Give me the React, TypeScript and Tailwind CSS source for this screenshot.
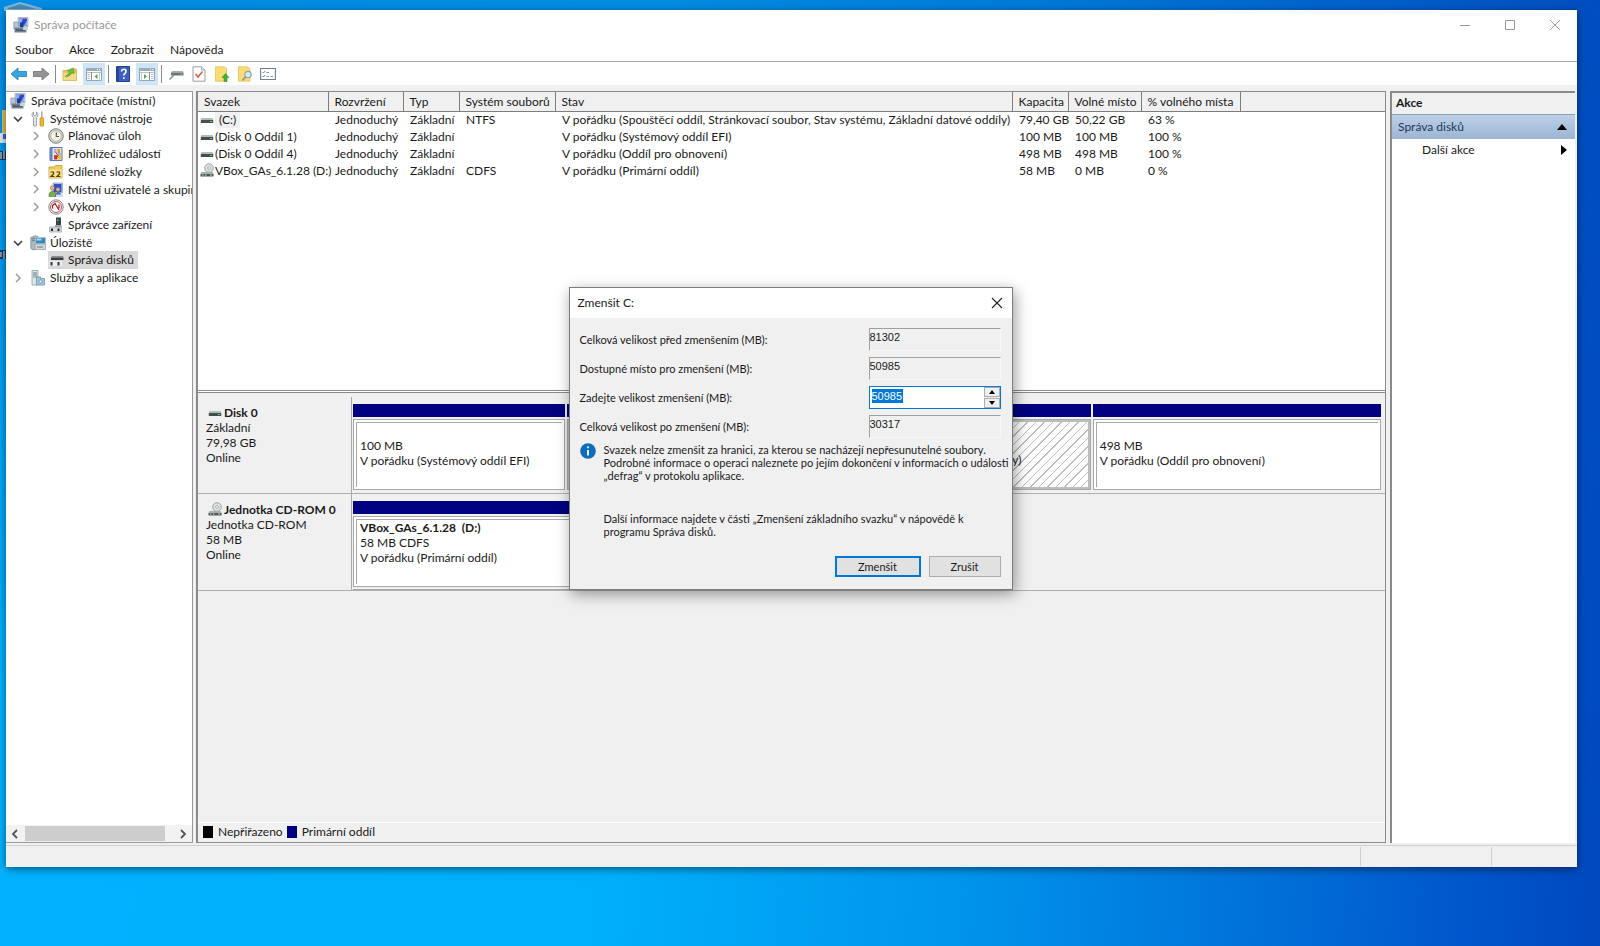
import React from "react";

type IconProps = { className?: string };

const ComputerIcon = ({ className = "h-4 w-4" }: IconProps) => (
  <svg className={className} viewBox="0 0 16 16" aria-hidden="true">
    <path d="M5 .5h10v9.500H5z" fill="#c3cfe0" stroke="#8d9cb4" strokeWidth=".6" />
    <path d="M6 1.500h8v7H6z" fill="#3347c4" />
    <path d="M6 1.500h4L7.500 8.500H6zM14 3.500V8.500h-3z" fill="#8fb0ee" />
    <path d="M.8 5h4.500v7H.8z" fill="#b9c6d4" stroke="#75879b" strokeWidth=".6" />
    <path d="M7 5.500h3.500v5H7z" fill="#1f3b8c" />
    <path d="M1.500 10.500h10l2 1.500v3.500h-12z" fill="#75828f" />
    <path d="M3 12.500h9v1.200H3z" fill="#3e4a57" />
    <path d="M10 10.500h5V13h-5z" fill="#c8d4de" />
  </svg>
);

const ToolsIcon = ({ className = "h-4 w-4" }: IconProps) => (
  <svg className={className} viewBox="0 0 16 16" aria-hidden="true">
    <path d="M3.500 1v3l1.500 1 1.500-1V1C8.500 2 8.500 5 6.500 6.500V14c0 1.800-3 1.800-3 0V6.500C1.500 5 1.500 2 3.500 1z" fill="#e3e6e8" stroke="#8b9298" strokeWidth=".8" />
    <path d="M11 .5h1.500V7H11z" fill="#a4a9ad" />
    <path d="M10 7h3.500v7c0 1.800-3.500 1.800-3.500 0z" fill="#efbb2c" stroke="#bb8716" strokeWidth=".7" />
  </svg>
);

const ClockIcon = ({ className = "h-4 w-4" }: IconProps) => (
  <svg className={className} viewBox="0 0 16 16" aria-hidden="true">
    <circle cx="8" cy="8" r="7.300" fill="#d0d3d4" stroke="#7f8487" strokeWidth="1" />
    <circle cx="8" cy="8" r="5.200" fill="#fbf6dc" stroke="#a5a48f" strokeWidth=".7" />
    <path d="M8.300 4.500V8.500H11" fill="none" stroke="#3b5876" strokeWidth="1.200" />
  </svg>
);

const EventIcon = ({ className = "h-4 w-4" }: IconProps) => (
  <svg className={className} viewBox="0 0 16 16" aria-hidden="true">
    <path d="M2 1.500h12v13H2z" fill="#dfe7f3" stroke="#5872ab" />
    <path d="M2 1.500h2.500v13H2z" fill="#6685bf" />
    <path d="M6 9h3v4.500H6z" fill="#d83a34" />
    <path d="M9.500 3H12v4H9.500z" fill="#ef8f2b" />
    <path d="M9.500 9H13v4.500H9.500z" fill="#ecc12e" />
    <path d="M6 4h2.500M6 6h2.500M10 8h3" stroke="#6882ac" />
    <path d="M8 6.500l2 3-2 3.500" stroke="#b02020" fill="none" strokeWidth=".9" />
  </svg>
);

const SharedIcon = ({ className = "h-4 w-4" }: IconProps) => (
  <svg className={className} viewBox="0 0 16 16" aria-hidden="true">
    <path d="M1 3h5l1.500-1.500H14V14H1z" fill="#f0cd5e" stroke="#c79b2d" strokeWidth=".8" />
    <path d="M1.300 5.500h12.400v8.200H1.300z" fill="#f9e08c" />
    <path d="M2.500 8h3v2L3 12.500H6.500M8.500 8h3v2L9 12.500h3.500" fill="none" stroke="#4b4016" strokeWidth="1.200" />
  </svg>
);

const UsersIcon = ({ className = "h-4 w-4" }: IconProps) => (
  <svg className={className} viewBox="0 0 16 16" aria-hidden="true">
    <path d="M5 1h9.500v10H5z" fill="#b8c6dd" stroke="#8494b0" strokeWidth=".6" />
    <path d="M6 2h7.500v8H6z" fill="#3450c6" />
    <circle cx="4.500" cy="6" r="2.200" fill="#e5b98a" stroke="#775433" strokeWidth=".5" />
    <path d="M1 13c0-5 7-5 7 0v1.500H1z" fill="#7fa944" stroke="#426a22" strokeWidth=".5" />
    <circle cx="10" cy="7.500" r="2" fill="#dba878" />
    <path d="M7 14.500c0-6 6.500-6 6.500 0z" fill="#4768b8" />
    <path d="M8 12.500h7v2.500H8z" fill="#d7dde4" />
  </svg>
);

const PerformanceIcon = ({ className = "h-4 w-4" }: IconProps) => (
  <svg className={className} viewBox="0 0 16 16" aria-hidden="true">
    <circle cx="8" cy="8" r="7.200" fill="#fbfbfb" stroke="#868686" strokeWidth="1" />
    <circle cx="8" cy="8" r="5.500" fill="#fff" stroke="#c25050" strokeWidth="1" />
    <path d="M4.500 9.500V6.500l2.500-2 4 6.500M11 5.500v4" fill="none" stroke="#a51d22" strokeWidth="1.200" />
  </svg>
);

const DeviceIcon = ({ className = "h-4 w-4" }: IconProps) => (
  <svg className={className} viewBox="0 0 16 16" aria-hidden="true">
    <path d="M8 .5h5V8H8z" fill="#39434a" />
    <path d="M9 2.500h1.500V4H9z" fill="#77b77b" />
    <path d="M7 8h6.500v2H7z" fill="#9aa2a7" />
    <path d="M1.500 10h12v5h-12z" fill="#d6dadc" stroke="#8b9297" strokeWidth=".6" />
    <path d="M3 11.500h2V14H3zM9.500 11.500h2V14h-2z" fill="#20262a" />
  </svg>
);

const StorageIcon = ({ className = "h-4 w-4" }: IconProps) => (
  <svg className={className} viewBox="0 0 16 16" aria-hidden="true">
    <path d="M.8 2.500L5 .8l3 .7v12l-5 1.500-2.200-1.500z" fill="#a9bac2" stroke="#75828c" strokeWidth=".7" />
    <path d="M2 4l4-1M2 6l4-1" stroke="#6d7982" />
    <path d="M5.500 2.500h10v6h-10z" fill="#3289bd" stroke="#a9c4d4" strokeWidth=".9" />
    <path d="M6.500 3.500h5v2h-5z" fill="#b3def2" />
    <path d="M5 9h10.500v5.500H5z" fill="#d4dadd" stroke="#89949b" strokeWidth=".7" />
    <path d="M7 12h6" stroke="#66757f" />
  </svg>
);

const DiskMgmtIcon = ({ className = "h-4 w-4" }: IconProps) => (
  <svg className={className} viewBox="0 0 16 16" aria-hidden="true">
    <path d="M4 4h11l.500 1.500H3z" fill="#8a8f90" />
    <path d="M3 5.500h12.500V8H3z" fill="#3b4042" />
    <path d="M1 9h13v5H1z" fill="#eceded" />
    <path d="M2.500 10h2v3.500h-2zM9.500 10h2v3.500h-2z" fill="#303436" />
  </svg>
);

const ServicesIcon = ({ className = "h-4 w-4" }: IconProps) => (
  <svg className={className} viewBox="0 0 16 16" aria-hidden="true">
    <path d="M2 .5h6v14.500H2z" fill="#dfe6eb" stroke="#8ea0ad" strokeWidth=".8" />
    <path d="M3 3h4M3 5h4" stroke="#64788a" />
    <path d="M3 7h4" stroke="#5fab62" />
    <path d="M6.500 7h4v1.500H14.500V15h-8z" fill="#a4c7dc" stroke="#6a94b0" strokeWidth=".8" />
    <circle cx="10.500" cy="11.500" r="1.700" fill="#eaf3f8" stroke="#5c87a4" strokeWidth=".8" />
  </svg>
);

const DriveIcon = ({ className = "h-4 w-3.5 shrink-0" }: IconProps) => (
  <svg className={className} viewBox="0 0 14 16" aria-hidden="true">
    <path d="M1.500 6h11l1 2H.5z" fill="#b4bcba" />
    <path d="M.8 8h12.400v3H.8z" fill="#42504c" />
    <path d="M10 9h2v1h-2z" fill="#69c98a" />
  </svg>
);

const CdDriveIcon = ({ className = "h-4 w-3.5 shrink-0" }: IconProps) => (
  <svg className={className} viewBox="0 0 14 16" aria-hidden="true">
    <circle cx="9" cy="5" r="4.300" fill="#dde1e0" stroke="#8b9390" strokeWidth=".8" />
    <circle cx="9" cy="5" r="1.400" fill="#fff" stroke="#8b9390" strokeWidth=".7" />
    <path d="M1.500 9h11l1 2H.5z" fill="#a8b0ae" />
    <path d="M.5 11h13v2.500H.5z" fill="#4c5a56" />
    <path d="M2 12h1.500M5 12h1.500M10 12h2" stroke="#cfd6d4" />
  </svg>
);

const ArrowIcon = ({ back }: { back?: boolean }) => (
  <svg className="h-[18px] w-[18px]" viewBox="0 0 18 18" aria-hidden="true">
    {back ? (
      <path d="M1 9l7-6v3.500h8.500v5H8V15z" fill="#36a5e0" stroke="#2f86bd" strokeWidth=".9" />
    ) : (
      <path d="M17 9l-7-6v3.500H1.500v5H10V15z" fill="#959595" stroke="#777" strokeWidth=".9" />
    )}
  </svg>
);

const FolderUpIcon = () => (
  <svg className="h-4 w-4" viewBox="0 0 16 16" aria-hidden="true">
    <path d="M1 4.500h7L9 3h5.500v11.500H1z" fill="#eac35c" stroke="#d3ae4e" strokeWidth=".8" />
    <path d="M1.500 7h12.700v7.200H1.500z" fill="#f6da8a" />
    <path d="M3 10.500C4.500 9.500 6.500 8 7.500 5.500L5 4.500 11.500 2l.5 6-2-1.200C8.500 9.500 6 11 3 10.500z" fill="#6cc03d" stroke="#3f9320" strokeWidth=".5" />
  </svg>
);

const PaneIcon = ({ right }: { right?: boolean }) => (
  <svg className="h-4 w-[18px]" viewBox="0 0 18 16" aria-hidden="true">
    <path d="M1.500 2.500h15v12h-15z" fill="#fff" stroke="#9aa5ad" />
    <path d="M1 2h16v3H1z" fill="#9fabb4" />
    <path d="M12 3.500h1M14 3.500h1" stroke="#fff" />
    <path d="M2 6.500h14" stroke="#b4c1ca" />
    {right ? (
      <>
        <path d="M11.500 6v8" stroke="#8896a1" />
        <path d="M13 8.500h2.500M13 10.500h2.500M13 12.500h2.500" stroke="#b4c1ca" />
        <path d="M6 8l3 2.500L6 13z" fill="#4cae3d" />
        <path d="M3.500 6.500v8" stroke="#c3ced6" />
      </>
    ) : (
      <>
        <path d="M6.500 6v8" stroke="#8896a1" />
        <path d="M2.500 8.500H5M2.500 10.500H5M2.500 12.500H5" stroke="#b4c1ca" />
        <path d="M12.500 8l-3 2.500 3 2.500z" fill="#4cae3d" />
        <path d="M14.500 6.500v8" stroke="#c3ced6" />
      </>
    )}
  </svg>
);

const HelpIcon = () => (
  <svg className="h-4 w-3.5" viewBox="0 0 14 16" aria-hidden="true">
    <path d="M.5.5h13v15H.5z" fill="#3a5fc0" stroke="#24408f" />
    <path d="M1 1h2v14H1z" fill="#2a479d" />
    <path d="M5.500 5.500c0-3 4.500-2.800 4.500 0 0 1.800-2.200 1.900-2.200 4M7.800 11.200v1.800" fill="none" stroke="#fff" strokeWidth="1.600" />
  </svg>
);

const ConnectIcon = () => (
  <svg className="h-4 w-4" viewBox="0 0 16 16" aria-hidden="true">
    <path d="M4 5h11l.500 1.500H3z" fill="#a9b3b0" />
    <path d="M3 6.500h12.500v3H3z" fill="#6a7673" />
    <path d="M12 7.500h2v1h-2z" fill="#6ad18f" />
    <path d="M6 9L1.500 13.500" stroke="#8b9693" strokeWidth="1.600" />
  </svg>
);

const CheckDocIcon = () => (
  <svg className="h-4 w-3.5" viewBox="0 0 14 16" aria-hidden="true">
    <path d="M1 .8h8.500L13 4v11.200H1z" fill="#fff" stroke="#8d9499" strokeWidth=".9" />
    <path d="M9.500.8V4H13" fill="#dfe3e6" stroke="#8d9499" strokeWidth=".7" />
    <path d="M3.500 8l2.500 3 4.500-5.500" fill="none" stroke="#e3603c" strokeWidth="1.600" />
  </svg>
);

const UpDocIcon = () => (
  <svg className="h-4 w-4" viewBox="0 0 16 16" aria-hidden="true">
    <path d="M1.500.8h9l2 2v12.400h-11z" fill="#f9dc72" stroke="#e3c465" strokeWidth=".8" />
    <path d="M11.500 7.500L8 11.500h2v4h3v-4h2z" fill="#48b030" stroke="#2f861f" strokeWidth=".5" />
  </svg>
);

const SearchDocIcon = () => (
  <svg className="h-4 w-4" viewBox="0 0 16 16" aria-hidden="true">
    <path d="M1.500.8h9l2.500 2v12.400H1.500z" fill="#f9dc72" stroke="#e3c465" strokeWidth=".8" />
    <circle cx="11" cy="8.500" r="3.200" fill="#d6ebf7" stroke="#87a3b5" strokeWidth="1.200" />
    <path d="M8.500 11l-3 3.500" stroke="#8d979e" strokeWidth="1.800" />
  </svg>
);

const ListViewIcon = () => (
  <svg className="h-4 w-4" viewBox="0 0 16 16" aria-hidden="true">
    <path d="M.6 2.500h14.800v11H.6z" fill="#fff" stroke="#6f8090" strokeWidth="1.100" />
    <path d="M2.500 6l1 1 1.500-2M2.500 10l1 1 1.500-2" fill="none" stroke="#4d86ba" strokeWidth=".9" />
    <path d="M6.500 6.500H9M6.500 10.500H9M10.500 10.500H13" stroke="#8496a6" />
  </svg>
);

const Chevron = ({ open }: { open?: boolean }) => (
  <svg className="h-2.5 w-2.5" viewBox="0 0 10 10" aria-hidden="true">
    {open ? (
      <path d="M1 3l4 4 4-4" fill="none" stroke="#404040" strokeWidth="1.600" />
    ) : (
      <path d="M3 1l4 4-4 4" fill="none" stroke="#9c9c9c" strokeWidth="1.500" />
    )}
  </svg>
);

type TreeItem = {
  label: string;
  level: 1 | 2;
  icon: React.ComponentType<IconProps>;
  state?: "open" | "closed";
  selected?: boolean;
};

const tree: TreeItem[] = [
  { label: "Systémové nástroje", level: 1, icon: ToolsIcon, state: "open" },
  { label: "Plánovač úloh", level: 2, icon: ClockIcon, state: "closed" },
  { label: "Prohlížeč událostí", level: 2, icon: EventIcon, state: "closed" },
  { label: "Sdílené složky", level: 2, icon: SharedIcon, state: "closed" },
  { label: "Místní uživatelé a skupiny", level: 2, icon: UsersIcon, state: "closed" },
  { label: "Výkon", level: 2, icon: PerformanceIcon, state: "closed" },
  { label: "Správce zařízení", level: 2, icon: DeviceIcon },
  { label: "Úložiště", level: 1, icon: StorageIcon, state: "open" },
  { label: "Správa disků", level: 2, icon: DiskMgmtIcon, selected: true },
  { label: "Služby a aplikace", level: 1, icon: ServicesIcon, state: "closed" },
];

const volumes = [
  ["(C:)", "Jednoduchý", "Základní", "NTFS", "V pořádku (Spouštěcí oddíl, Stránkovací soubor, Stav systému, Základní datové oddíly)", "79,40 GB", "50,22 GB", "63 %"],
  ["(Disk 0 Oddíl 1)", "Jednoduchý", "Základní", "", "V pořádku (Systémový oddíl EFI)", "100 MB", "100 MB", "100 %"],
  ["(Disk 0 Oddíl 4)", "Jednoduchý", "Základní", "", "V pořádku (Oddíl pro obnovení)", "498 MB", "498 MB", "100 %"],
  ["VBox_GAs_6.1.28 (D:)", "Jednoduchý", "Základní", "CDFS", "V pořádku (Primární oddíl)", "58 MB", "0 MB", "0 %"],
];

const columns = ["Svazek", "Rozvržení", "Typ", "Systém souborů", "Stav", "Kapacita", "Volné místo", "% volného místa"];

function TitleBar() {
  return (
    <header className="flex h-[29px] shrink-0 items-center bg-white pl-[7px]">
      <ComputerIcon />
      <h1 className="ml-[5px] flex-1 text-[#999]">Správa počítače</h1>
      <button aria-label="Minimalizovat" className="flex h-7 w-[45px] items-center justify-center">
        <svg className="h-3 w-3" viewBox="0 0 12 12"><path d="M1 6.500h10" stroke="#999" /></svg>
      </button>
      <button aria-label="Maximalizovat" className="flex h-7 w-[45px] items-center justify-center">
        <svg className="h-3 w-3" viewBox="0 0 12 12"><path d="M1.500 1.500h9v9h-9z" fill="none" stroke="#999" /></svg>
      </button>
      <button aria-label="Zavřít okno" className="flex h-7 w-[45px] items-center justify-center">
        <svg className="h-3 w-3" viewBox="0 0 12 12"><path d="M1 1l10 10M11 1L1 11" stroke="#999" /></svg>
      </button>
    </header>
  );
}

function Toolbar() {
  const button = "flex h-[22px] w-[22px] items-center justify-center";
  const pressed = "flex h-[22px] w-[22px] items-center justify-center bg-[#cde6f7]";
  const divider = "mx-[3px] h-[18px] w-px bg-[#8a8a8a]";
  return (
    <div role="toolbar" aria-label="Nástroje" className="flex h-6 shrink-0 items-center border-t border-[#a8a8a8] bg-white pl-0.5">
      <button aria-label="Zpět" className={button}><ArrowIcon back /></button>
      <button aria-label="Vpřed" className={button}><ArrowIcon /></button>
      <span className={divider} />
      <div className="flex gap-0.5">
        <button aria-label="O úroveň výš" className={button}><FolderUpIcon /></button>
        <button aria-label="Strom konzoly" className={pressed}><PaneIcon /></button>
      </div>
      <span className={divider} />
      <div className="flex gap-0.5">
        <button aria-label="Nápověda" className={button}><HelpIcon /></button>
        <button aria-label="Podokno akcí" className={pressed}><PaneIcon right /></button>
      </div>
      <span className={divider} />
      <div className="flex gap-px">
        <button aria-label="Disk" className={button}><ConnectIcon /></button>
        <button aria-label="Vlastnosti" className={button}><CheckDocIcon /></button>
        <button aria-label="Exportovat" className={button}><UpDocIcon /></button>
        <button aria-label="Hledat" className={button}><SearchDocIcon /></button>
        <button aria-label="Seznam" className={button}><ListViewIcon /></button>
      </div>
    </div>
  );
}

function Tree() {
  return (
    <nav aria-label="Strom konzoly" className="flex w-[187px] shrink-0 flex-col overflow-hidden border-b border-r border-t border-[#9a9a9a] bg-white">
      <ul className="grid h-[195px] auto-rows-fr whitespace-nowrap">
        <li className="flex items-center gap-[5px] pl-1">
          <ComputerIcon />
          Správa počítače (místní)
        </li>
        {tree.map(({ label, level, icon: Icon, state, selected }) => (
          <li key={label} className={level === 1 ? "flex items-center pl-[7px]" : "flex items-center pl-[25px]"}>
            <span className="w-[17px] shrink-0">{state && <Chevron open={state === "open"} />}</span>
            <span className={selected ? "flex h-[18px] shrink-0 items-center gap-1 bg-[#d9d9d9] pr-1" : "flex h-[18px] shrink-0 items-center gap-1"}>
              <Icon />
              {label}
            </span>
          </li>
        ))}
      </ul>
      <div className="mt-auto flex h-[17px] items-center bg-[#f2f2f2] px-1">
        <svg className="h-2.5 w-2.5" viewBox="0 0 10 10"><path d="M7 1L3 5l4 4" fill="none" stroke="#555" strokeWidth="1.800" /></svg>
        <div className="ml-[5px] h-[15px] flex-1 bg-[#cdcdcd]" />
        <svg className="ml-[13px] h-2.5 w-2.5" viewBox="0 0 10 10"><path d="M3 1l4 4-4 4" fill="none" stroke="#555" strokeWidth="1.800" /></svg>
      </div>
    </nav>
  );
}

function VolumeTable() {
  return (
    <table className="w-full table-fixed border-collapse whitespace-nowrap text-left">
      <colgroup>
        <col className="w-[130px]" />
        <col className="w-[75px]" />
        <col className="w-14" />
        <col className="w-24" />
        <col className="w-[457px]" />
        <col className="w-14" />
        <col className="w-[73px]" />
        <col className="w-[99px]" />
        <col />
      </colgroup>
      <thead>
        <tr className="h-[19px] border-b border-[#7d7d7d] bg-[#f0f0f0]">
          {columns.map((name) => (
            <th key={name} scope="col" className="border-r border-[#7d7d7d] p-0 pl-[6px] pt-px font-normal leading-4">{name}</th>
          ))}
          <td />
        </tr>
      </thead>
      <tbody>
        {volumes.map((row) => (
          <tr key={row[0]} className="h-[17px]">
            {row.map((cell, i) =>
              i === 0 ? (
                <td key={i} className="p-0 pl-0.5 leading-4">
                  <span className="flex items-center gap-px">
                    {row[3] === "CDFS" ? <CdDriveIcon /> : <DriveIcon />}
                    <span className={cell === "(C:)" ? "bg-[#f0f0f0] px-1" : ""}>{cell}</span>
                  </span>
                </td>
              ) : (
                <td key={i} className="p-0 pl-[7px] leading-4">{cell}</td>
              ),
            )}
            <td />
          </tr>
        ))}
      </tbody>
    </table>
  );
}

type PartitionProps = { title?: string; size: string; status: string; selected?: boolean };

function Partition({ title, size, status, selected }: PartitionProps) {
  return (
    <div className="min-w-0 overflow-hidden">
      <div className="h-[13px] bg-[#000080]" />
      <div className={selected ? "mt-0.5 flex h-[71px] border border-[#a8a8a8] bg-[#bdbdbd] p-0.5" : "mt-0.5 flex h-[71px] border border-[#a8a8a8] bg-white p-0.5"}>
        <div
          className={
            selected
              ? "flex-1 overflow-hidden whitespace-nowrap bg-white bg-[repeating-linear-gradient(135deg,#fff_0px,#fff_5px,#bcbcbc_5px,#bcbcbc_6px)] pl-[3px] leading-[15px]"
              : "flex-1 overflow-hidden whitespace-nowrap border-l border-t border-[#a8a8a8] pl-[3px] leading-[15px]"
          }
        >
          <p className="h-[15px] whitespace-pre font-bold">{title}</p>
          <p>{size}</p>
          <p>{status}</p>
        </div>
      </div>
    </div>
  );
}

function DiskRow({ icon, name, lines, children }: { icon: React.ReactNode; name: string; lines: string[]; children: React.ReactNode }) {
  return (
    <section className="flex h-[97px] border-b border-[#b0b0b0]">
      <div className="w-[154px] shrink-0 border-r border-[#a8a8a8] pl-2 pt-2 leading-[15px]">
        <h2 className="flex h-[15px] items-center gap-0.5 whitespace-nowrap pl-0.5 font-bold">{icon}{name}</h2>
        {lines.map((line) => <p key={line}>{line}</p>)}
      </div>
      <div className="min-w-0 flex-1 pl-px pr-1 pt-[7px]">{children}</div>
    </section>
  );
}

function Workspace() {
  return (
    <main className="ml-[3px] flex min-w-0 flex-1 flex-col border-b border-l-2 border-r border-t border-[#8a8a8a] bg-[#f0f0f0]">
      <div className="h-[298px] shrink-0 overflow-hidden bg-white"><VolumeTable /></div>
      <div className="h-[3px] shrink-0 border-b border-t border-[#8a8a8a] bg-white" />
      <div className="pt-1">
        <DiskRow icon={<DriveIcon />} name="Disk 0" lines={["Základní", "79,98 GB", "Online"]}>
          <div className="grid grid-cols-[212fr_523fr_288fr] gap-0.5">
            <Partition size="100 MB" status="V pořádku (Systémový oddíl EFI)" />
            <Partition title="(C:)" size="79,40 GB NTFS" status="V pořádku (Spouštěcí oddíl, Stránkovací soubor, Stav systému, Základní datové oddíly)" selected />
            <Partition size="498 MB" status="V pořádku (Oddíl pro obnovení)" />
          </div>
        </DiskRow>
        <DiskRow icon={<CdDriveIcon />} name="Jednotka CD-ROM 0" lines={["Jednotka CD-ROM", "58 MB", "Online"]}>
          <div className="w-[372px] border-b border-[#a8a8a8] pb-0.5">
            <Partition title="VBox_GAs_6.1.28  (D:)" size="58 MB CDFS" status="V pořádku (Primární oddíl)" />
          </div>
        </DiskRow>
      </div>
      <div className="mt-auto flex h-5 shrink-0 items-center border-t border-white pb-px pl-[5px]">
        <span className="mr-[5px] h-3 w-2.5 bg-black" />Nepřiřazeno
        <span className="ml-1 mr-[5px] h-3 w-2.5 bg-[#000080]" />Primární oddíl
      </div>
    </main>
  );
}

function Actions() {
  return (
    <aside className="ml-1 mr-0.5 w-[185px] shrink-0 border-l-2 border-t-2 border-[#8a8a8a] bg-white">
      <h2 className="h-[21px] bg-[#f0f0f0] pl-1 font-bold leading-5">Akce</h2>
      <button className="flex h-[25px] w-full items-center justify-between border-t border-[#8ba3b8] bg-linear-to-b from-[#bcd0e6] to-[#9db5d3] pl-[6px] pr-2 text-[#1e395b]">
        Správa disků
        <svg className="h-1.5 w-2.5" viewBox="0 0 10 6"><path d="M5 0l5 6H0z" fill="#000" /></svg>
      </button>
      <button className="flex h-[22px] w-full items-center justify-between pl-[30px] pr-2">
        Další akce
        <svg className="h-2.5 w-1.5" viewBox="0 0 6 10"><path d="M0 0l6 5-6 5z" fill="#000" /></svg>
      </button>
    </aside>
  );
}

function ReadOnlyRow({ id, label, value }: { id: string; label: string; value: string }) {
  return (
    <div className="flex h-[23px] items-center justify-between">
      <label htmlFor={id}>{label}</label>
      <input id={id} readOnly value={value} className="h-[23px] w-[132px] border border-[#f8f8f8] border-l-[#a0a0a0] border-t-[#a0a0a0] pb-1.5 font-['Liberation_Sans',sans-serif] outline-none" />
    </div>
  );
}

function ShrinkDialog() {
  return (
    <div className="pointer-events-none absolute inset-0 flex items-center justify-center pr-0.5">
      <div role="dialog" aria-labelledby="shrink-title" className="pointer-events-auto w-[444px] border border-[#7c7c7c] bg-[#f0f0f0] text-[11px] shadow-[2px_4px_14px_rgba(0,0,0,0.4)]">
        <header className="flex h-[30px] items-center justify-between bg-white pb-px pl-2 pr-[7px]">
          <h2 id="shrink-title" className="text-[12px]">Zmenšit C:</h2>
          <button aria-label="Zavřít" className="flex h-5 w-4 items-center justify-center">
            <svg className="h-3 w-3" viewBox="0 0 12 12"><path d="M1 1l10 10M11 1L1 11" stroke="#222" strokeWidth="1.100" /></svg>
          </button>
        </header>
        <div className="flex flex-col gap-1.5 pl-2.5 pr-[11px] pt-2.5">
          <ReadOnlyRow id="total-before" label="Celková velikost před zmenšením (MB):" value="81302" />
          <ReadOnlyRow id="available" label="Dostupné místo pro zmenšení (MB):" value="50985" />
          <div className="flex h-[23px] items-center justify-between">
            <label htmlFor="amount">Zadejte velikost zmenšení (MB):</label>
            <div className="flex h-[23px] w-[132px] border border-[#0078d7] bg-white">
              <div className="relative flex-1">
                <span className="absolute left-0.5 top-0.5 h-[14px] w-[31px] bg-[#0078d7]" />
                <input id="amount" defaultValue="50985" className="relative h-[18px] w-full bg-transparent pl-0.5 font-['Liberation_Sans',sans-serif] text-white outline-none" />
              </div>
              <div className="flex w-4 flex-col gap-px bg-[#f0f0f0]">
                <button aria-label="Zvýšit" className="flex flex-1 items-center justify-center border border-[#acacac]">
                  <svg className="h-1 w-1.5" viewBox="0 0 6 4"><path d="M3 0l3 4H0z" fill="#000" /></svg>
                </button>
                <button aria-label="Snížit" className="flex flex-1 items-center justify-center border border-[#acacac]">
                  <svg className="h-1 w-1.5" viewBox="0 0 6 4"><path d="M3 4l3-4H0z" fill="#000" /></svg>
                </button>
              </div>
            </div>
          </div>
          <ReadOnlyRow id="total-after" label="Celková velikost po zmenšení (MB):" value="30317" />
        </div>
        <div className="flex gap-2 pl-2.5 pt-[5px]">
          <svg className="h-4 w-4 shrink-0" viewBox="0 0 16 16" aria-hidden="true">
            <circle cx="8" cy="8" r="7.800" fill="#0f6cbd" />
            <path d="M8 7v5.500M8 3.500v1.800" stroke="#fff" strokeWidth="1.800" />
          </svg>
          <div className="whitespace-nowrap leading-[13px]">
            <p>
              Svazek nelze zmenšit za hranici, za kterou se nacházejí nepřesunutelné soubory.<br />
              Podrobné informace o operaci naleznete po jejím dokončení v informacích o události<br />
              „defrag“ v protokolu aplikace.
            </p>
            <p className="mt-[30px]">
              Další informace najdete v části „Zmenšení základního svazku“ v nápovědě k<br />
              programu Správa disků.
            </p>
          </div>
        </div>
        <div className="flex justify-end gap-2 pb-3 pr-[11px] pt-[18px]">
          <button className="h-[21px] w-[86px] border-2 border-[#0078d7] bg-[#e1e1e1]">Zmenšit</button>
          <button className="h-[21px] w-[72px] border border-[#adadad] bg-[#e1e1e1]">Zrušit</button>
        </div>
      </div>
    </div>
  );
}

function DesktopIcons() {
  return (
    <svg className="absolute left-0 top-0 h-[264px] w-12" viewBox="0 0 48 264" aria-hidden="true">
      <path d="M4 7l16-5 22 6v3H4z" fill="#7fb9dc" />
      <path d="M8 8l12-4 16 5H8z" fill="#4d8fb8" />
      <path d="M2 110h5v24H2z" fill="#d8c15a" />
      <path d="M0 133h7v10H0z" fill="#d9e6f5" />
      <path d="M3 134h4v5H3z" fill="#3d62c4" />
      <path d="M0 151h7v9H0zM0 250h7v9H0z" fill="#0c3f66" />
      <path d="M1 152v7M4 151v8M1 252v5M4 251v8" stroke="#e8f4fc" />
    </svg>
  );
}

export default function App() {
  return (
    <div className="relative flex min-h-screen bg-[linear-gradient(180deg,rgba(0,72,180,0.35)_0%,rgba(0,72,180,0)_75%),linear-gradient(95deg,#00b2ff_0%,#00b0fc_40%,#0094ec_62%,#0070d8_80%,#0056cc_92%,#0048be_100%)] pb-[79px] pl-1.5 pr-[23px] pt-2.5 font-[Lato,'Open_Sans',sans-serif] text-[12px] leading-4 text-[#1a1a1a]">
      <DesktopIcons />
      <div className="relative flex min-w-0 flex-1 flex-col bg-[#f0f0f0] shadow-[0_2px_8px_rgba(0,0,0,0.5)]">
        <TitleBar />
        <nav aria-label="Nabídka" className="flex h-[22px] shrink-0 items-center gap-4 bg-white pl-[9px]">
          <button>Soubor</button>
          <button>Akce</button>
          <button>Zobrazit</button>
          <button>Nápověda</button>
        </nav>
        <Toolbar />
        <div className="mt-1.5 flex min-h-0 flex-1">
          <Tree />
          <Workspace />
          <Actions />
        </div>
        <footer className="mt-0.5 flex h-[22px] shrink-0 justify-end border-t border-[#d0d0d0] py-px">
          <span className="w-[131px] border-l border-[#cfcfcf]" />
          <span className="w-[86px] border-l border-[#cfcfcf]" />
        </footer>
        <ShrinkDialog />
      </div>
    </div>
  );
}
